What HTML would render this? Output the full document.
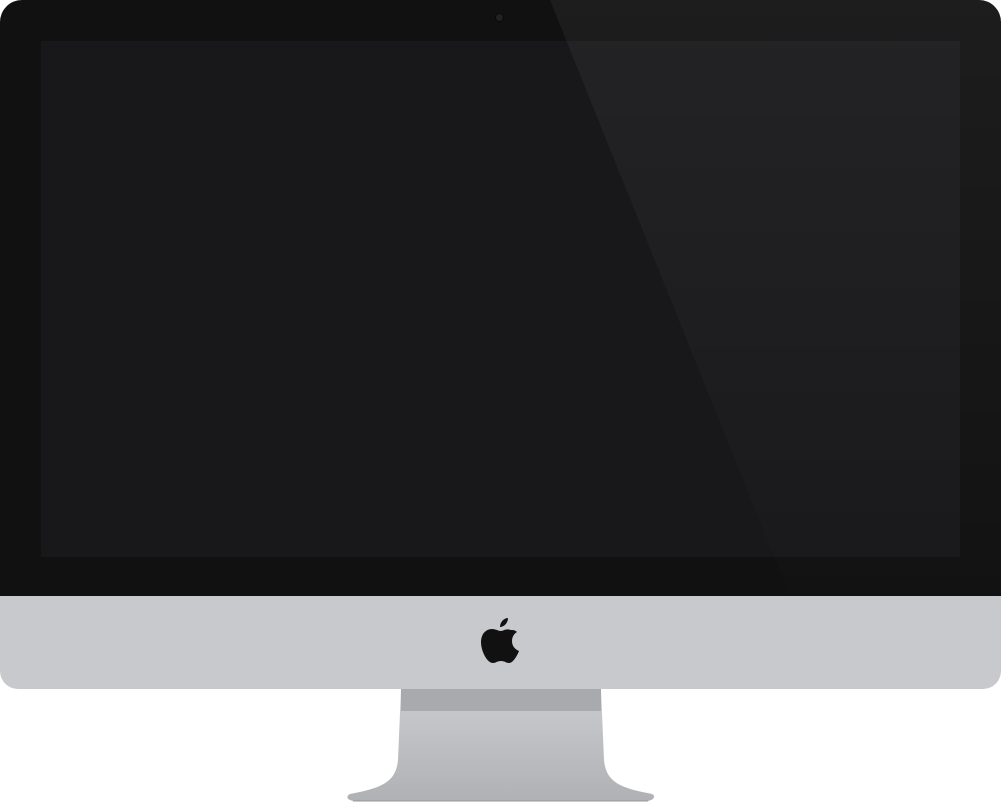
<!DOCTYPE html><html><head><style>
body{margin:0;width:1001px;height:807px;background:#fff;position:relative;overflow:hidden}
.bez{position:absolute;left:0;top:0;width:1001px;height:596px;background:#111;border-radius:22px 22px 0 0}
.scr{position:absolute;left:41px;top:41px;width:919px;height:516px;background:#18181a}
.chin{position:absolute;left:0;top:596px;width:1001px;height:93px;background:#c8c9cc;border-radius:0 0 18px 18px}
.cam{position:absolute;left:496px;top:14px;width:7px;height:7px;border-radius:50%;background:#222;box-shadow:0 0 0 1px #0a0a0a}
</style></head><body>
<div class="bez"></div>
<div class="scr"></div>
<svg style="position:absolute;left:0;top:0" width="1001" height="807">
<defs>
<linearGradient id="g" x1="0" y1="0" x2="0" y2="1"><stop offset="0" stop-color="#cbcccf"/><stop offset="1" stop-color="#b0b1b4"/></linearGradient>
<linearGradient id="gl" x1="0" y1="0" x2="0" y2="1"><stop offset="0" stop-color="#fff" stop-opacity=".05"/><stop offset="1" stop-color="#fff" stop-opacity=".005"/></linearGradient>
<clipPath id="c"><rect x="0" y="0" width="1001" height="620" rx="22"/></clipPath>
</defs>
<polygon clip-path="url(#c)" points="550,0 1001,0 1001,596 790,596" fill="url(#gl)"/>
<path d="M401,689 H601 L604,760 C606,782 620,788 652,794 C656,796 654,800 648,801 H354 C346,800 346,796 350,794 C382,788 396,782 398,760 Z" fill="url(#g)"/>
<rect x="401" y="689" width="200" height="22" fill="#a9aaad"/>
<path d="M353,801 H648" stroke="#999" stroke-width="2" opacity=".5"/>
</svg>
<div class="cam"></div>
<div class="chin"></div>
<svg style="position:absolute;left:480px;top:616px" width="42" height="48" viewBox="0 0 42 48">
<path d="M28,2 C28,7 24,11 20,11 C20,6 24,2 28,2 Z" fill="#111"/>
<path d="M31,14 C26,12 23,15 21,15 C18,15 16,13 12,13 C6,13 1,18 1,26 C1,35 7,47 13,47 C16,47 17,45 21,45 C25,45 26,47 29,47 C33,47 37,40 39,35 C34,33 32,29 32,25 C32,20 35,17 37,16 C35,14 33,14 31,14 Z" fill="#111"/>
</svg>
</body></html>
